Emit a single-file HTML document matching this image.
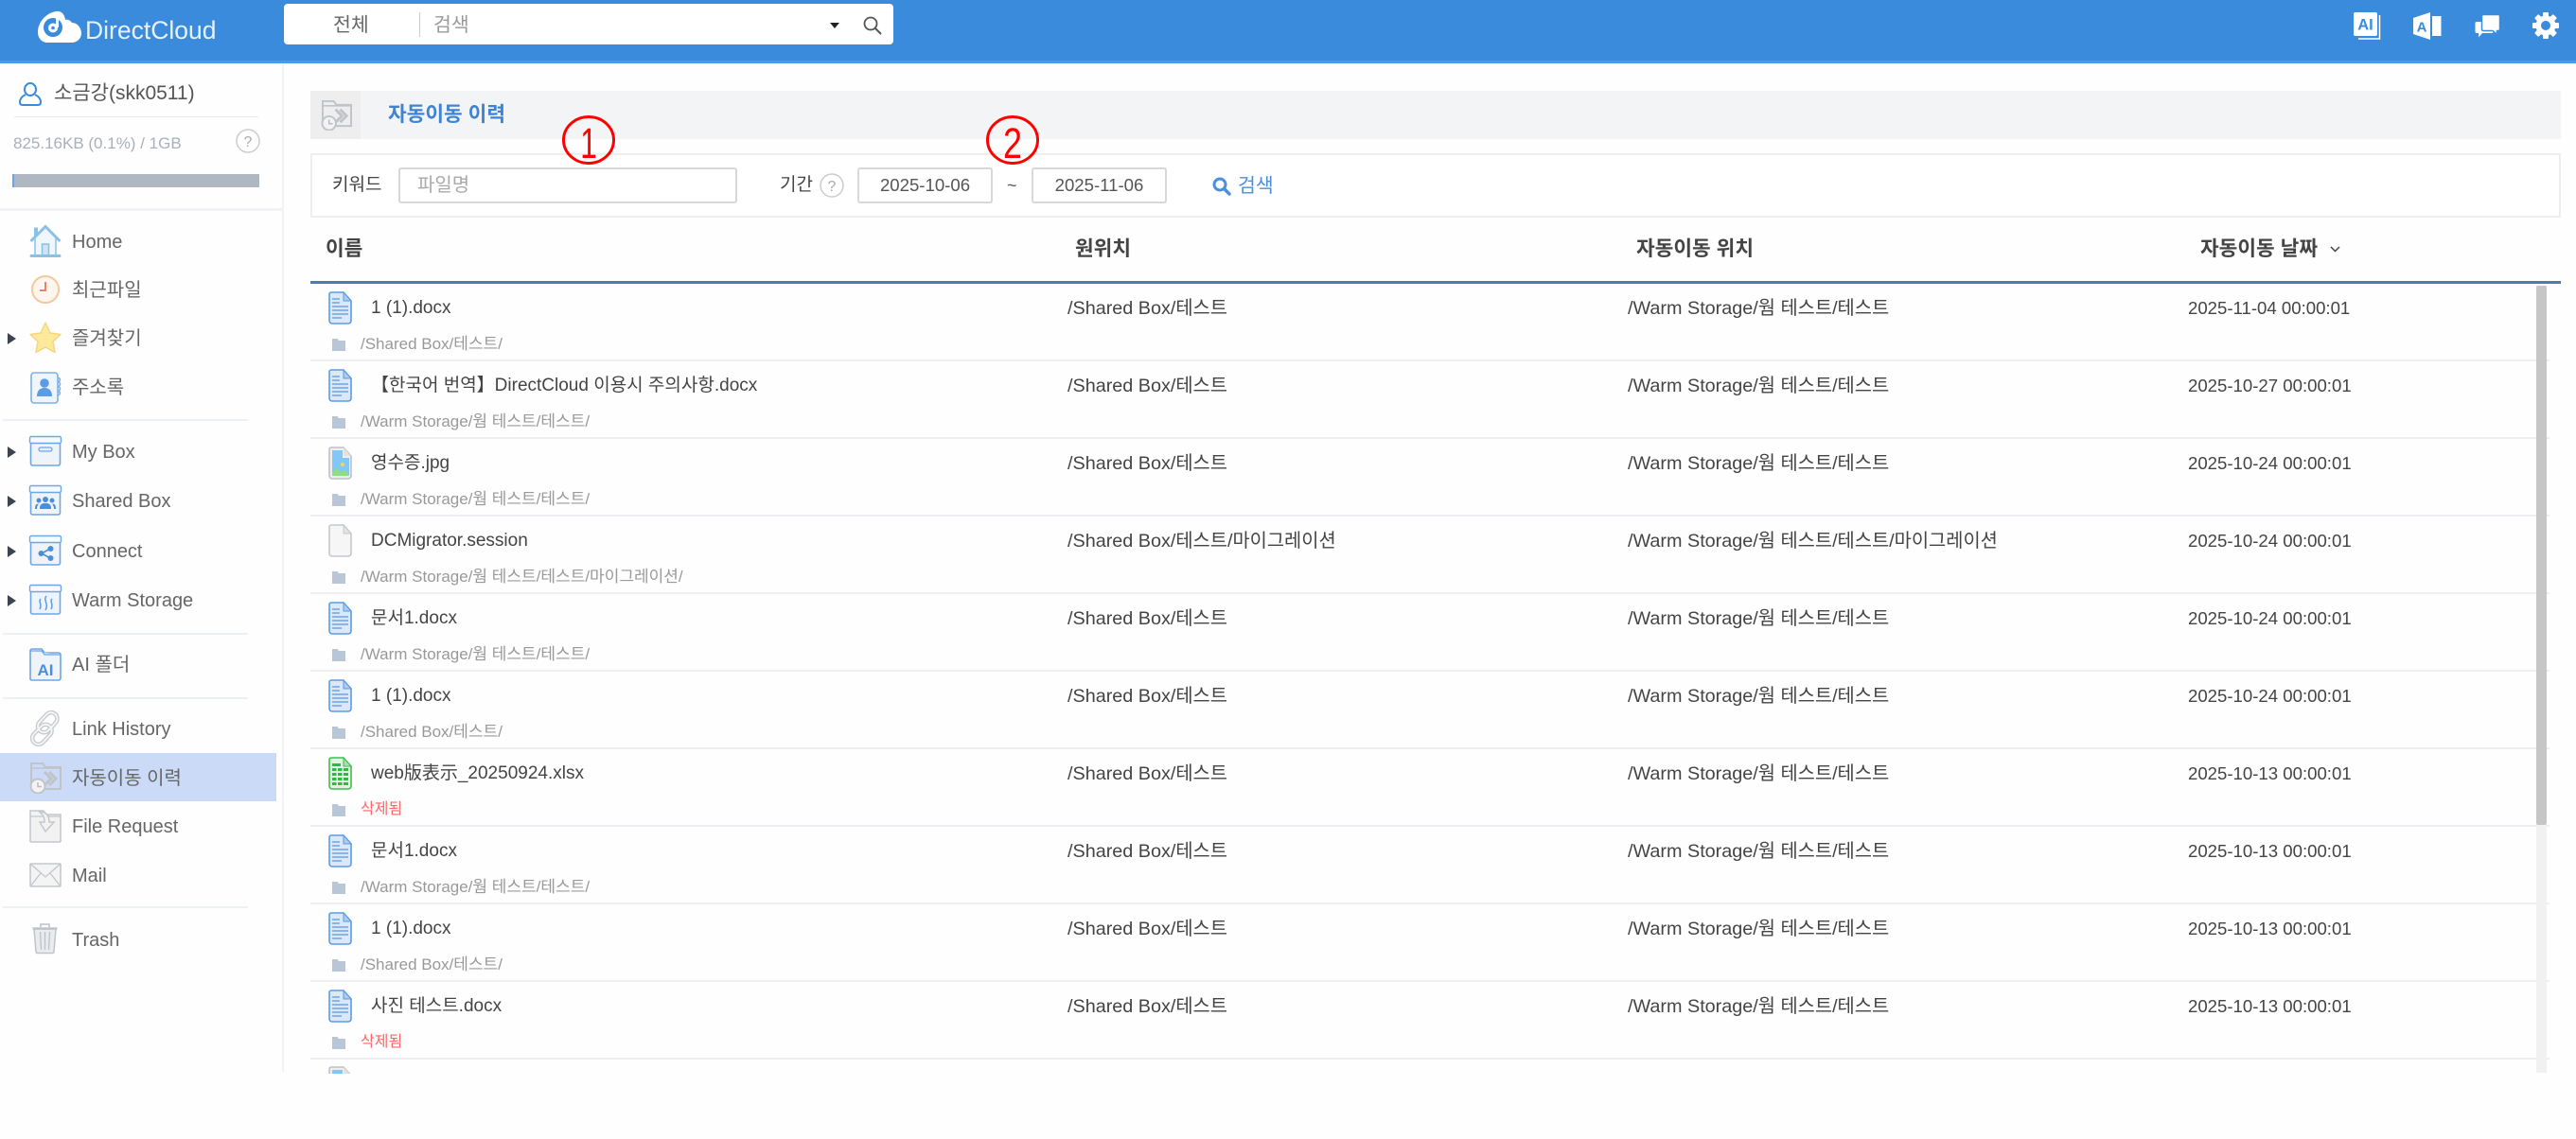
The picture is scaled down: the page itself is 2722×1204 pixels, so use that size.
<!DOCTYPE html>
<html lang="ko">
<head>
<meta charset="utf-8">
<title>자동이동 이력</title>
<style>
html,body{margin:0;padding:0;width:2722px;height:1204px;overflow:hidden;background:#fefefe}
body{position:relative;font-family:"Liberation Sans","Noto Sans CJK KR",sans-serif;color:#444}
.a,.m,.t,.r>*{position:absolute;white-space:nowrap}
svg{position:absolute;overflow:visible}
.m{left:76px;font-size:20px;line-height:30px;color:#666}
.tri{position:absolute;left:8px;width:0;height:0;border-left:9px solid #3c4450;border-top:6px solid transparent;border-bottom:6px solid transparent}
.sep{position:absolute;left:3px;width:259px;height:2px;background:#edf0f4}
.th{position:absolute;top:248px;font-size:21.4px;line-height:30px;font-weight:bold;color:#444}
.r{position:absolute;left:328px;width:2366px;height:82px;box-sizing:border-box;border-bottom:2px solid #eeeff2}
.n{left:64px;top:11px;font-size:19px;line-height:30px;color:#444}
.c1,.c2,.c3{top:11px;font-size:19.8px;line-height:30px;color:#444}
.c3{font-size:18.6px}
.c1{left:800px}.c2{left:1392px}.c3{left:1984px}
.p{left:53px;top:52px;font-size:17px;line-height:24px;color:#999}
.del{color:#f66;font-size:16px}
.ic{left:19px;top:8px;width:25px;height:35px}
.fd{left:23px;top:58px;width:14px;height:13px}
.input{position:absolute;box-sizing:border-box;top:177px;height:38px;background:#fff;border:2px solid #d8d8d8;border-radius:3px;font-size:18.6px;line-height:34px;color:#555;text-align:center}
</style>
</head>
<body>
<svg width="0" height="0" style="position:absolute">
<defs>
<symbol id="doc" viewBox="0 0 25 35"><path d="M3 1H16L24 10V31a3 3 0 0 1-3 3H4a3 3 0 0 1-3-3V3a2 2 0 0 1 2-2Z" fill="#dce8f8" stroke="#5c9ce6" stroke-width="1.600"/><path d="M16 1V10H24Z" fill="#a9ccf2" stroke="#5c9ce6" stroke-width="1"/><path d="M4 8H12M4 12H12M4 16H21M4 20H21M4 24H21M4 28H14" stroke="#6aa5e8" stroke-width="1.400" fill="none"/></symbol>
<symbol id="jpg" viewBox="0 0 25 35"><path d="M3 1H16L24 10V31a3 3 0 0 1-3 3H4a3 3 0 0 1-3-3V3a2 2 0 0 1 2-2Z" fill="#eee" stroke="#bcc2c8" stroke-width="1.600"/><path d="M4 4H15V12H22V31H4Z" fill="#7fc8f8"/><path d="M4 31V27L9 22L13 27L17 24L22 30V31Z" fill="#8fdc8a"/><circle cx="15" cy="19" r="2.200" fill="#f7d25c"/><path d="M16 1V10H24Z" fill="#e2e2e2"/></symbol>
<symbol id="blank" viewBox="0 0 25 35"><path d="M3 1H16L24 10V31a3 3 0 0 1-3 3H4a3 3 0 0 1-3-3V3a2 2 0 0 1 2-2Z" fill="#f6f6f6" stroke="#c4c8cc" stroke-width="1.600"/><path d="M16 1V10H24Z" fill="#e4e4e4" stroke="#c4c8cc" stroke-width="1"/></symbol>
<symbol id="xls" viewBox="0 0 25 35"><path d="M3 1H16L24 10V31a3 3 0 0 1-3 3H4a3 3 0 0 1-3-3V3a2 2 0 0 1 2-2Z" fill="#dff4df" stroke="#3fc04f" stroke-width="1.600"/><path d="M16 1V10H24Z" fill="#a6e2ac" stroke="#3fc04f" stroke-width="1"/><path d="M4 7h9v3H4ZM4 12h4.500v3H4ZM10 12h4.500v3H10ZM16 12h5v3h-5ZM4 17h4.500v3H4ZM10 17h4.500v3H10ZM16 17h5v3h-5ZM4 22h4.500v3H4ZM10 22h4.500v3H10ZM16 22h5v3h-5ZM4 27h4.500v3H4ZM10 27h4.500v3H10ZM16 27h5v3h-5Z" fill="#2fb944"/></symbol>
<symbol id="fol" viewBox="0 0 14 13"><path d="M0 0H5.500L7 2H14V13H0Z" fill="#b8c6d6"/></symbol>
<symbol id="auto" viewBox="0 0 34 34"><path d="M2 24V2H14L17 6H33V29H12" fill="none" stroke="#c0c4c9" stroke-width="2"/><path d="M2 7H33" stroke="#c0c4c9" stroke-width="1.600"/><path d="M16 11L23 18L16 25M21 11L28 18L21 25" fill="none" stroke="#c0c4c9" stroke-width="3"/><circle cx="9" cy="26" r="7.500" fill="#f3f3f3" stroke="#c0c4c9" stroke-width="2"/><path d="M9 22V26.500H13" fill="none" stroke="#b8bcc1" stroke-width="1.500"/></symbol>
</defs>
</svg>

<!-- header -->
<div class="a" style="left:0;top:0;width:2722px;height:64px;background:#3a8bdb"></div>
<div class="a" style="left:0;top:64px;width:2722px;height:3px;background:#4f99e2"></div>
<svg style="left:40px;top:11px" width="46" height="35" viewBox="0 0 46 35"><path d="M10 34C4 34 0 29 0 23C0 13 8 3 19 1C24 0 28 3 29 10C31 9 34 10 36 13C42 13 46 19 46 24C46 30 41 34 36 34Z" fill="#fff"/><circle cx="16" cy="18" r="10" fill="#3a8bdb"/><circle cx="16" cy="18.500" r="5" fill="#fff"/><path d="M20.500 1V18" stroke="#fff" stroke-width="3"/><circle cx="16" cy="18.500" r="1.800" fill="#3a8bdb"/></svg>
<div class="a" style="left:90px;top:14px;font-size:26.5px;line-height:36px;color:rgba(255,255,255,.88)">DirectCloud</div>
<div class="a" style="left:300px;top:4px;width:644px;height:43px;background:#fff;border-radius:4px"></div>
<div class="a" style="left:352px;top:12px;font-size:20.5px;line-height:30px;color:#666">전체</div>
<div class="a" style="left:443px;top:13px;width:1px;height:26px;background:#ccc"></div>
<div class="a" style="left:458px;top:12px;font-size:20.5px;line-height:30px;color:#999">검색</div>
<div class="a" style="left:877px;top:24px;width:0;height:0;border-top:6px solid #222;border-left:5px solid transparent;border-right:5px solid transparent"></div>
<svg style="left:912px;top:17px" width="20" height="20" viewBox="0 0 20 20"><circle cx="8" cy="8" r="6.500" fill="none" stroke="#555" stroke-width="1.800"/><path d="M13 13L19 19" stroke="#555" stroke-width="2"/></svg>

<svg style="left:2487px;top:13px" width="30" height="30" viewBox="0 0 30 30"><rect width="25" height="25" rx="2" fill="#fff"/><text x="12.500" y="18.500" text-anchor="middle" font-family="Liberation Sans" font-weight="bold" font-size="16.500" fill="#3a8bdb">AI</text><path d="M5 28H27.500V3" fill="none" stroke="#fff" stroke-width="1.500"/></svg>
<svg style="left:2550px;top:13px" width="30" height="30" viewBox="0 0 30 30"><path d="M0 6L18 0V29L0 23Z" fill="#fff"/><rect x="20" y="4" width="9.500" height="21" fill="#fff"/><text x="9" y="20.500" text-anchor="middle" font-family="Liberation Sans" font-weight="bold" font-size="15" fill="#3a8bdb">A</text></svg>
<svg style="left:2615px;top:16px" width="27" height="25" viewBox="0 0 27 25"><path d="M2 7H18a1.500 1.500 0 0 1 1.500 1.500V17.500a1.500 1.500 0 0 1-1.500 1.500H8L4 23.500V19H2a1.500 1.500 0 0 1-1.500-1.500V8.500A1.500 1.500 0 0 1 2 7Z" fill="#fff"/><path d="M9 -.5H25a1.500 1.500 0 0 1 1.500 1.500V15a1.500 1.500 0 0 1-1.500 1.500H23.500V20.500L19 16.500H9a1.500 1.500 0 0 1-1.500-1.500V1A1.500 1.500 0 0 1 9 -.5Z" fill="#fff" stroke="#3a8bdb" stroke-width="1.500"/></svg>
<svg style="left:2676px;top:13px" width="28" height="28" viewBox="0 0 28 28"><g fill="#fff"><rect x="11" y="0" width="6" height="28" rx="1"/><rect x="11" y="0" width="6" height="28" rx="1" transform="rotate(45 14 14)"/><rect x="11" y="0" width="6" height="28" rx="1" transform="rotate(90 14 14)"/><rect x="11" y="0" width="6" height="28" rx="1" transform="rotate(135 14 14)"/><circle cx="14" cy="14" r="10.500"/></g><circle cx="14" cy="14" r="5" fill="#3a8bdb"/></svg>

<!-- sidebar -->
<div class="a" style="left:298px;top:67px;width:2px;height:1066px;background:#f0f2f5"></div>
<svg style="left:20px;top:87px" width="24" height="25" viewBox="0 0 24 25"><ellipse cx="12" cy="7.500" rx="6" ry="6.500" fill="none" stroke="#3a8bdb" stroke-width="2"/><path d="M7 13C3 15 1 18 1 21C1 23 2 24 4 24H20C22 24 23 23 23 21C23 18 21 15 17 13" fill="none" stroke="#3a8bdb" stroke-width="2"/></svg>
<div class="a" style="left:57px;top:84px;font-size:21px;line-height:30px;color:#555">소금강(skk0511)</div>
<div class="a" style="left:15px;top:123px;width:258px;height:1px;background:#e8e8e8"></div>
<div class="a" style="left:14px;top:137px;font-size:17px;line-height:30px;color:#a8b0ba">825.16KB (0.1%) / 1GB</div>
<svg style="left:249px;top:136px" width="26" height="26" viewBox="0 0 26 26"><circle cx="13" cy="13" r="12" fill="#fff" stroke="#ccc" stroke-width="1.500"/><text x="13" y="19" text-anchor="middle" font-family="Liberation Sans" font-size="16" fill="#aaa">?</text></svg>
<div class="a" style="left:13px;top:184px;width:261px;height:14px;background:#aeb7c2;border-left:2px solid #6aa5e6;box-sizing:border-box"></div>
<div class="a" style="left:0;top:220px;width:298px;height:3px;background:#f0f2f5"></div>

<div class="a" style="left:0;top:796px;width:292px;height:51px;background:#cadaf7"></div>

<svg style="left:31px;top:237px" width="34" height="35" viewBox="0 0 34 35"><path d="M6 14V33H28V14L17 3Z" fill="#eff6fc" stroke="#8cc0e4" stroke-width="1.500"/><path d="M5 3.500H9V9L5 13Z" fill="#8cc0e4"/><path d="M1.500 18L17 2.500L32.500 18" fill="none" stroke="#8cc0e4" stroke-width="3"/><rect x="13.500" y="21" width="7" height="12" fill="#cfe4f4" stroke="#8cc0e4" stroke-width="1.500"/><path d="M2 33.500H32" stroke="#8cc0e4" stroke-width="3" stroke-linecap="round"/></svg>
<div class="m" style="top:241px">Home</div>
<svg style="left:33px;top:291px" width="30" height="30" viewBox="0 0 30 30"><circle cx="15" cy="15" r="14" fill="#fdf6ee" stroke="#f4c89e" stroke-width="2"/><path d="M15 7V16H9" fill="none" stroke="#e8826a" stroke-width="2"/></svg>
<div class="m" style="top:292px">최근파일</div>
<div class="tri" style="top:352px"></div>
<svg style="left:31px;top:340px" width="34" height="34" viewBox="0 0 34 34"><path d="M17 1L22 12L33 13.500L25 21L27 32.500L17 27L7 32.500L9 21L1 13.500L12 12Z" fill="#fde99c" stroke="#f6d581" stroke-width="1.500" stroke-linejoin="round"/></svg>
<div class="m" style="top:343px">즐겨찾기</div>
<svg style="left:32px;top:393px" width="33" height="35" viewBox="0 0 33 35"><rect x="1" y="1" width="28" height="32" rx="3" fill="#eef5fc" stroke="#7cb0e8" stroke-width="1.600"/><circle cx="15" cy="12" r="4.800" fill="#5c9ce6"/><path d="M7 26C7 20 10 17 15 17C20 17 23 20 23 26Z" fill="#5c9ce6"/><path d="M29 6C32 7 32 9 30 10.500C32 12 32 14 30 15.500C32 17 32 19 30 20.500C32 22 32 24 29 25" fill="none" stroke="#7cb0e8" stroke-width="1.500"/></svg>
<div class="m" style="top:395px">주소록</div>
<div class="sep" style="top:443px"></div>

<div class="tri" style="top:472px"></div>
<svg style="left:31px;top:461px" width="34" height="32" viewBox="0 0 34 32"><rect x="1.500" y="6" width="31" height="25" rx="2" fill="#eff4fa" stroke="#6ea6e6" stroke-width="1.600"/><rect x="0.500" y="0.500" width="33" height="7" rx="1.500" fill="#f7fafd" stroke="#6ea6e6" stroke-width="1.400"/><rect x="10" y="12" width="14" height="4" rx="2" fill="#e3edf8" stroke="#6ea6e6" stroke-width="1.300"/></svg>
<div class="m" style="top:463px">My Box</div>
<div class="tri" style="top:524px"></div>
<svg style="left:31px;top:513px" width="34" height="32" viewBox="0 0 34 32"><rect x="1.500" y="6" width="31" height="25" rx="2" fill="#eff4fa" stroke="#6ea6e6" stroke-width="1.600"/><rect x="0.500" y="0.500" width="33" height="7" rx="1.500" fill="#f7fafd" stroke="#6ea6e6" stroke-width="1.400"/><g fill="#4a8ede"><circle cx="17" cy="15" r="3"/><circle cx="10" cy="16" r="2.500"/><circle cx="24" cy="16" r="2.500"/><path d="M11 25C11 20 13 19 17 19C21 19 23 20 23 25ZM8 25H6C6 21 7 19.500 10 19.500C9 21 8 22 8 25ZM26 25H28C28 21 27 19.500 24 19.500C25 21 26 22 26 25Z"/></g></svg>
<div class="m" style="top:515px">Shared Box</div>
<div class="tri" style="top:577px"></div>
<svg style="left:31px;top:566px" width="34" height="32" viewBox="0 0 34 32"><rect x="1.500" y="6" width="31" height="25" rx="2" fill="#eff4fa" stroke="#6ea6e6" stroke-width="1.600"/><rect x="0.500" y="0.500" width="33" height="7" rx="1.500" fill="#f7fafd" stroke="#6ea6e6" stroke-width="1.400"/><path d="M22 14L13 19L22 24" fill="none" stroke="#4a8ede" stroke-width="1.600"/><circle cx="22.500" cy="14" r="3" fill="#4a8ede"/><circle cx="12.500" cy="19" r="3" fill="#4a8ede"/><circle cx="22.500" cy="24" r="3" fill="#4a8ede"/></svg>
<div class="m" style="top:568px">Connect</div>
<div class="tri" style="top:629px"></div>
<svg style="left:31px;top:618px" width="34" height="32" viewBox="0 0 34 32"><rect x="1.500" y="6" width="31" height="25" rx="2" fill="#eff4fa" stroke="#6ea6e6" stroke-width="1.600"/><rect x="0.500" y="0.500" width="33" height="7" rx="1.500" fill="#f7fafd" stroke="#6ea6e6" stroke-width="1.400"/><path d="M12 15C9 18 14 20 11 26M18 12C14 16 21 20 17 27M24 15C21 18 26 20 23 26" fill="none" stroke="#5c9ce6" stroke-width="1.500"/></svg>
<div class="m" style="top:620px">Warm Storage</div>
<div class="sep" style="top:669px"></div>

<svg style="left:31px;top:685px" width="34" height="35" viewBox="0 0 34 35"><path d="M1 33V3a2 2 0 0 1 2-2H13L16 5H31a2 2 0 0 1 2 2V32a2 2 0 0 1-2 2H2Z" fill="#eff4fa" stroke="#6ea6e6" stroke-width="1.600"/><path d="M1 3H13L16 7H33" fill="#d7e5f7" stroke="#6ea6e6" stroke-width="1.200"/><text x="17" y="29" text-anchor="middle" font-family="Liberation Sans" font-weight="bold" font-size="17" fill="#4a8ede">AI</text></svg>
<div class="m" style="top:688px">AI 폴더</div>
<div class="sep" style="top:737px"></div>

<svg style="left:31px;top:753px" width="34" height="35" viewBox="0 0 34 35"><g fill="none" stroke="#c6c9cd" stroke-width="4.500"><rect x="13" y="0" width="13" height="24" rx="6.500" transform="rotate(43 21 11)"/><rect x="7" y="11" width="13" height="24" rx="6.500" transform="rotate(43 13 23)"/></g><g fill="none" stroke="#f7f7f7" stroke-width="1.800"><rect x="13" y="0" width="13" height="24" rx="6.500" transform="rotate(43 21 11)"/><rect x="7" y="11" width="13" height="24" rx="6.500" transform="rotate(43 13 23)"/></g></svg>
<div class="m" style="top:756px">Link History</div>
<svg style="left:31px;top:805px" width="34" height="34" viewBox="0 0 34 34"><use href="#auto"/></svg>
<div class="m" style="top:808px">자동이동 이력</div>
<svg style="left:31px;top:856px" width="34" height="35" viewBox="0 0 34 35"><path d="M1 33V1H15L18 5H33V33a1 1 0 0 1-1 1H2a1 1 0 0 1-1-1Z" fill="#f2f2f2" stroke="#c4c8cc" stroke-width="1.600"/><path d="M1 7H33" stroke="#c4c8cc" stroke-width="1.200"/><path d="M10 2C18 2 21 6 21 13H26L17 23L11 13H16C16 8 14 4 10 2Z" fill="#f2f2f2" stroke="#c4c8cc" stroke-width="1.500"/></svg>
<div class="m" style="top:859px">File Request</div>
<svg style="left:31px;top:912px" width="34" height="26" viewBox="0 0 34 26"><rect x="1" y="1" width="32" height="24" rx="1" fill="#f4f4f4" stroke="#c4c8cc" stroke-width="1.600"/><path d="M1 1L17 15L33 1M1 25L12 11M33 25L22 11" fill="none" stroke="#c4c8cc" stroke-width="1.400"/></svg>
<div class="m" style="top:911px">Mail</div>
<div class="sep" style="top:958px"></div>
<svg style="left:34px;top:976px" width="27" height="32" viewBox="0 0 27 32"><path d="M2 6L4 30a1.500 1.500 0 0 0 1.500 1.500H21.500a1.500 1.500 0 0 0 1.500-1.500L25 6Z" fill="#e9ebee" stroke="#bfc4ca" stroke-width="1.500"/><path d="M0.500 5.500H26.500" stroke="#bfc4ca" stroke-width="2.400"/><path d="M9 4V1H18V4" fill="none" stroke="#bfc4ca" stroke-width="1.600"/><path d="M8.500 9L9.500 28M13.500 9V28M18.500 9L17.500 28" stroke="#bfc4ca" stroke-width="1.400"/></svg>
<div class="m" style="top:979px">Trash</div>

<!-- title -->
<div class="a" style="left:328px;top:96px;width:2378px;height:51px;background:#f3f4f6"></div>
<div class="a" style="left:328px;top:96px;width:53px;height:51px;background:#eeeeee"></div>
<svg style="left:339px;top:105px" width="33" height="33" viewBox="0 0 34 34"><use href="#auto"/></svg>
<div class="a" style="left:410px;top:106px;font-size:21.4px;line-height:30px;font-weight:bold;color:#3f83d4">자동이동 이력</div>

<!-- filter -->
<div class="a" style="left:328px;top:162px;width:2378px;height:68px;box-sizing:border-box;background:#fff;border:2px solid #eeeeee"></div>
<div class="a" style="left:351px;top:181px;font-size:19px;line-height:30px;color:#444">키워드</div>
<div class="input" style="left:421px;width:358px;text-align:left;padding-left:18px;color:#aaa;font-size:20px">파일명</div>
<div class="a" style="left:824px;top:181px;font-size:19px;line-height:30px;color:#444">기간</div>
<svg style="left:866px;top:183px" width="26" height="26" viewBox="0 0 26 26"><circle cx="13" cy="13" r="12" fill="#fff" stroke="#ccc" stroke-width="1.500"/><text x="13" y="19" text-anchor="middle" font-family="Liberation Sans" font-size="16" fill="#aaa">?</text></svg>
<div class="input" style="left:906px;width:143px">2025-10-06</div>
<div class="a" style="left:1064px;top:181px;font-size:18px;line-height:30px;color:#555">~</div>
<div class="input" style="left:1090px;width:143px">2025-11-06</div>
<svg style="left:1281px;top:187px" width="20" height="20" viewBox="0 0 20 20"><circle cx="8" cy="8" r="6" fill="none" stroke="#4a8fe0" stroke-width="3"/><path d="M12.500 12.500L18 18" stroke="#4a8fe0" stroke-width="3.400" stroke-linecap="round"/></svg>
<div class="a" style="left:1308px;top:182px;font-size:20.5px;line-height:30px;color:#4a8fe0">검색</div>

<!-- annotations -->
<svg style="left:594px;top:122px" width="56" height="52" viewBox="0 0 56 52"><ellipse cx="28" cy="26" rx="26.500" ry="24.500" fill="none" stroke="#f00" stroke-width="3"/><text transform="translate(28 45) scale(.7 1)" text-anchor="middle" font-family="Liberation Sans" font-size="45" fill="#f00">1</text></svg>
<svg style="left:1042px;top:122px" width="56" height="52" viewBox="0 0 56 52"><ellipse cx="28" cy="26" rx="26.500" ry="24.500" fill="none" stroke="#f00" stroke-width="3"/><text transform="translate(28 45) scale(.8 1)" text-anchor="middle" font-family="Liberation Sans" font-size="45" fill="#f00">2</text></svg>

<!-- table head -->
<div class="th" style="left:344px">이름</div>
<div class="th" style="left:1136px">원위치</div>
<div class="th" style="left:1729px">자동이동 위치</div>
<div class="th" style="left:2325px">자동이동 날짜</div>
<svg style="left:2462px;top:260px" width="11" height="7" viewBox="0 0 11 7"><path d="M1 1L5.500 5.500L10 1" fill="none" stroke="#444" stroke-width="1.500"/></svg>
<div class="a" style="left:328px;top:297px;width:2378px;height:3px;background:#4a7ab8"></div>

<!-- rows -->
<div class="r" style="top:300px"><svg class="ic"><use href="#doc"/></svg><div class="n">1 (1).docx</div><div class="c1">/Shared Box/테스트</div><div class="c2">/Warm Storage/웜 테스트/테스트</div><div class="c3">2025-11-04 00:00:01</div><svg class="fd"><use href="#fol"/></svg><div class="p">/Shared Box/테스트/</div></div>
<div class="r" style="top:382px"><svg class="ic"><use href="#doc"/></svg><div class="n">【한국어 번역】DirectCloud 이용시 주의사항.docx</div><div class="c1">/Shared Box/테스트</div><div class="c2">/Warm Storage/웜 테스트/테스트</div><div class="c3">2025-10-27 00:00:01</div><svg class="fd"><use href="#fol"/></svg><div class="p">/Warm Storage/웜 테스트/테스트/</div></div>
<div class="r" style="top:464px"><svg class="ic"><use href="#jpg"/></svg><div class="n">영수증.jpg</div><div class="c1">/Shared Box/테스트</div><div class="c2">/Warm Storage/웜 테스트/테스트</div><div class="c3">2025-10-24 00:00:01</div><svg class="fd"><use href="#fol"/></svg><div class="p">/Warm Storage/웜 테스트/테스트/</div></div>
<div class="r" style="top:546px"><svg class="ic"><use href="#blank"/></svg><div class="n">DCMigrator.session</div><div class="c1">/Shared Box/테스트/마이그레이션</div><div class="c2">/Warm Storage/웜 테스트/테스트/마이그레이션</div><div class="c3">2025-10-24 00:00:01</div><svg class="fd"><use href="#fol"/></svg><div class="p">/Warm Storage/웜 테스트/테스트/마이그레이션/</div></div>
<div class="r" style="top:628px"><svg class="ic"><use href="#doc"/></svg><div class="n">문서1.docx</div><div class="c1">/Shared Box/테스트</div><div class="c2">/Warm Storage/웜 테스트/테스트</div><div class="c3">2025-10-24 00:00:01</div><svg class="fd"><use href="#fol"/></svg><div class="p">/Warm Storage/웜 테스트/테스트/</div></div>
<div class="r" style="top:710px"><svg class="ic"><use href="#doc"/></svg><div class="n">1 (1).docx</div><div class="c1">/Shared Box/테스트</div><div class="c2">/Warm Storage/웜 테스트/테스트</div><div class="c3">2025-10-24 00:00:01</div><svg class="fd"><use href="#fol"/></svg><div class="p">/Shared Box/테스트/</div></div>
<div class="r" style="top:792px"><svg class="ic"><use href="#xls"/></svg><div class="n">web版表示_20250924.xlsx</div><div class="c1">/Shared Box/테스트</div><div class="c2">/Warm Storage/웜 테스트/테스트</div><div class="c3">2025-10-13 00:00:01</div><svg class="fd"><use href="#fol"/></svg><div class="p del">삭제됨</div></div>
<div class="r" style="top:874px"><svg class="ic"><use href="#doc"/></svg><div class="n">문서1.docx</div><div class="c1">/Shared Box/테스트</div><div class="c2">/Warm Storage/웜 테스트/테스트</div><div class="c3">2025-10-13 00:00:01</div><svg class="fd"><use href="#fol"/></svg><div class="p">/Warm Storage/웜 테스트/테스트/</div></div>
<div class="r" style="top:956px"><svg class="ic"><use href="#doc"/></svg><div class="n">1 (1).docx</div><div class="c1">/Shared Box/테스트</div><div class="c2">/Warm Storage/웜 테스트/테스트</div><div class="c3">2025-10-13 00:00:01</div><svg class="fd"><use href="#fol"/></svg><div class="p">/Shared Box/테스트/</div></div>
<div class="r" style="top:1038px"><svg class="ic"><use href="#doc"/></svg><div class="n">사진 테스트.docx</div><div class="c1">/Shared Box/테스트</div><div class="c2">/Warm Storage/웜 테스트/테스트</div><div class="c3">2025-10-13 00:00:01</div><svg class="fd"><use href="#fol"/></svg><div class="p del">삭제됨</div></div>
<div class="a" style="left:347px;top:1127px;width:25px;height:8px;overflow:hidden"><svg style="left:0;top:0" width="25" height="35"><use href="#jpg"/></svg></div>

<!-- scrollbar -->
<div class="a" style="left:2680px;top:302px;width:11px;height:832px;background:#f1f1f1"></div>
<div class="a" style="left:2680px;top:302px;width:11px;height:570px;background:#c6c6c6;border-radius:2px"></div>
</body>
</html>
